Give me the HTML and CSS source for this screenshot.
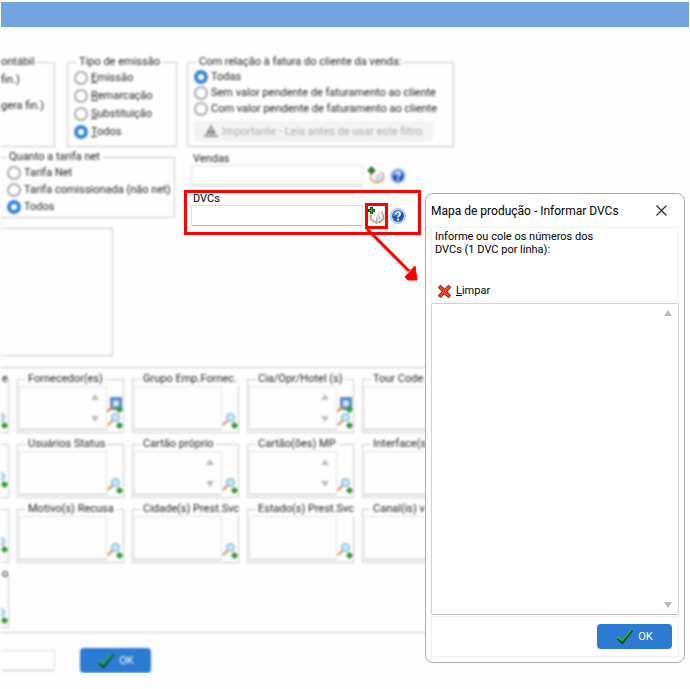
FILE: index.html
```html
<!DOCTYPE html>
<html lang="pt-BR">
<head>
  <meta charset="UTF-8">
  <meta name="viewport" content="width=device-width, initial-scale=1.0">
  <title>Mapa de produção</title>
  <link rel="stylesheet" href="styles.css">
</head>
<body>

  <!-- shared icons -->
  <svg class="sprite" aria-hidden="true">
    <symbol id="icon-search" viewBox="0 0 16 16">
      <path d="M1.500 11.500 6 7" stroke="#e0965a" stroke-width="2.400" stroke-linecap="round"/>
      <circle cx="8.500" cy="4.500" r="3.900" fill="#c4e8fb" stroke="#8cb4dc" stroke-width="1.400"/>
      <path d="M12.500 9.500v6M9.500 12.500h6" stroke="#2f9a2c" stroke-width="3"/>
    </symbol>
    <symbol id="icon-search-all" viewBox="0 0 16 16">
      <path d="M3 0h12v13H3z" fill="#5d8fd3"/>
      <path d="M5 2h8v9H5z" fill="#a9c8ee" stroke="#3b6cb4"/>
      <path d="M1 14 5.500 9.500" stroke="#e0863c" stroke-width="2.400" stroke-linecap="round"/>
      <circle cx="9" cy="6.500" r="3.200" fill="#d4f1fd" stroke="#78a8dc"/>
      <path d="M12.500 9.500v6M9.500 12.500h6" stroke="#2f9a2c" stroke-width="3"/>
    </symbol>
    <symbol id="icon-book" viewBox="0 0 17 18">
      <path d="M2.500 8 3 12.500 8.500 16.200 11 14.800 12.500 15 16 11 14 5" fill="#fff3e4" stroke="#ee8236" stroke-width="1.300"/>
      <path d="M3.200 7 6 7.500 9 10.500 8.500 14.800 4 11.800z" fill="#fff" stroke="#b9d3ea" stroke-width=".6"/>
      <path d="M9 10.500 10 6.500 13.500 4.500 15 10 11.500 13.500 8.500 14.800z" fill="#e3f2fd" stroke="#9cc3e6" stroke-width=".6"/>
      <path d="M9 10.500 8.600 14.800M11 8.500 11.500 12" stroke="#6fb0e0" stroke-width=".9"/>
      <path d="M3.500 0v7M0 3.500h7" stroke="#0b4a0b" stroke-width="3"/>
      <path d="M3.500 1v5M1 3.500h5" stroke="#38b32e" stroke-width="1.200"/>
    </symbol>
    <symbol id="icon-help" viewBox="0 0 16 16">
      <circle cx="8" cy="8" r="7.400" fill="#e6eefb" stroke="#8fb0e4"/>
      <circle cx="8" cy="8" r="6" fill="#1f53bd"/>
      <path d="M2.500 8a5.500 5.500 0 0 1 9-4Q8 8 2.500 8z" fill="#5c8ae0"/>
      <path d="M5.800 6.300C5.800 3.300 10.400 3.500 10.200 6.200 10 7.500 8 7.600 8 9.300" fill="none" stroke="#fff" stroke-width="1.700"/>
      <path d="M7 10.500h2v2H7z" fill="#fff"/>
    </symbol>
    <symbol id="icon-check" viewBox="0 0 17 16">
      <path d="M1 10 3 8.500 6 11.500 14.500 1.500 16.500 2 6.500 15z" fill="#0a3c20" stroke="#0a2c3c" stroke-width=".8"/>
      <path d="M1 9.200 3 7.800 6 10.800 14.300 1 16 1.500 6.300 13z" fill="#12a51a"/>
      <path d="M1.500 9 3 8 6 11.300 14.500 1.300" fill="none" stroke="#3fd33c" stroke-width=".8"/>
    </symbol>
  </svg>

  <div class="titlebar"></div>

  <main class="window">
    <div class="filters blurred">
      <fieldset class="group cut contabil">
        <legend>ontábil</legend>
        <p>fin.)</p>
        <p>gera fin.)</p>
      </fieldset>

      <fieldset class="group emissao">
        <legend>Tipo de emissão</legend>
        <label><input type="radio" name="emissao"><span><u>E</u>missão</span></label>
        <label><input type="radio" name="emissao"><span><u>R</u>emarcação</span></label>
        <label><input type="radio" name="emissao"><span><u>S</u>ubstituição</span></label>
        <label><input type="radio" name="emissao" checked><span><u>T</u>odos</span></label>
      </fieldset>

      <fieldset class="group fatura">
        <legend>Com relação à fatura do cliente da venda:</legend>
        <label><input type="radio" name="fatura" checked><span>Todas</span></label>
        <label><input type="radio" name="fatura"><span>Sem valor pendente de faturamento ao cliente</span></label>
        <label><input type="radio" name="fatura"><span>Com valor pendente de faturamento ao cliente</span></label>
        <button type="button" class="notice" disabled>
          <svg width="14" height="13" viewBox="0 0 14 13"><path d="M7 0 12 9H2z" fill="#777"/><path d="M0 10h14v2H0z" fill="#999"/><path d="M7 3v3M7 7v1" stroke="#fff" stroke-width="1.500"/></svg>
          Importante - Leia antes de usar este filtro
        </button>
      </fieldset>
    </div>

    <div class="middle">
      <div class="middle-left blurred">
        <fieldset class="group cut tarifa">
          <legend>Quanto a tarifa net</legend>
          <label><input type="radio" name="tarifa"><span>Tarifa Net</span></label>
          <label><input type="radio" name="tarifa"><span>Tarifa comissionada (não net)</span></label>
          <label><input type="radio" name="tarifa" checked><span>Todos</span></label>
        </fieldset>
        <div class="empty-box"></div>
      </div>

      <div class="middle-right">
        <div class="lookup blurred">
          <label for="vendas">Vendas</label>
          <div class="lookup-row">
            <input type="text" id="vendas">
            <button type="button" class="book" aria-label="Informar vendas"><svg><use href="#icon-book"/></svg></button>
            <button type="button" class="help" aria-label="Ajuda"><svg><use href="#icon-help"/></svg></button>
          </div>
        </div>

        <div class="lookup marked">
          <label for="dvcs">DVCs</label>
          <div class="lookup-row">
            <input type="text" id="dvcs">
            <button type="button" class="book" aria-label="Informar DVCs"><svg><use href="#icon-book"/></svg></button>
            <button type="button" class="help" aria-label="Ajuda"><svg><use href="#icon-help"/></svg></button>
          </div>
          <svg class="arrow" viewBox="0 0 54 56"><path d="M2 2 44 44" stroke="#f00" stroke-width="3"/><path d="M40 50 50 39 52 53 43 53z" fill="#f00" stroke="#f00"/></svg>
        </div>
      </div>
    </div>

    <div class="panel blurred">
      <fieldset class="list cut"><legend>e</legend><div class="tools"><svg><use href="#icon-search"/></svg></div></fieldset>
      <fieldset class="list">
        <legend>Fornecedor(es)</legend>
        <div class="box scroll"></div>
        <div class="tools"><svg><use href="#icon-search-all"/></svg><svg><use href="#icon-search"/></svg></div>
      </fieldset>
      <fieldset class="list">
        <legend>Grupo Emp.Fornec.</legend>
        <div class="box"></div>
        <div class="tools"><svg><use href="#icon-search"/></svg></div>
      </fieldset>
      <fieldset class="list">
        <legend>Cia/Opr/Hotel (s)</legend>
        <div class="box scroll"></div>
        <div class="tools"><svg><use href="#icon-search-all"/></svg><svg><use href="#icon-search"/></svg></div>
      </fieldset>
      <fieldset class="list"><legend>Tour Code</legend><div class="box"></div></fieldset>

      <fieldset class="list cut"><div class="tools"><svg><use href="#icon-search"/></svg></div></fieldset>
      <fieldset class="list">
        <legend>Usuários Status</legend>
        <div class="box"></div>
        <div class="tools"><svg><use href="#icon-search"/></svg></div>
      </fieldset>
      <fieldset class="list">
        <legend>Cartão próprio</legend>
        <div class="box scroll"></div>
        <div class="tools"><svg><use href="#icon-search"/></svg></div>
      </fieldset>
      <fieldset class="list">
        <legend>Cartão(ões) MP</legend>
        <div class="box scroll"></div>
        <div class="tools"><svg><use href="#icon-search"/></svg></div>
      </fieldset>
      <fieldset class="list"><legend>Interface(s)</legend><div class="box"></div></fieldset>

      <fieldset class="list cut"><div class="tools"><svg><use href="#icon-search"/></svg></div></fieldset>
      <fieldset class="list">
        <legend>Motivo(s) Recusa</legend>
        <div class="box"></div>
        <div class="tools"><svg><use href="#icon-search"/></svg></div>
      </fieldset>
      <fieldset class="list">
        <legend>Cidade(s) Prest.Svc</legend>
        <div class="box"></div>
        <div class="tools"><svg><use href="#icon-search"/></svg></div>
      </fieldset>
      <fieldset class="list">
        <legend>Estado(s) Prest.Svc</legend>
        <div class="box"></div>
        <div class="tools"><svg><use href="#icon-search"/></svg></div>
      </fieldset>
      <fieldset class="list"><legend>Canal(is) v</legend><div class="box"></div></fieldset>

      <fieldset class="list cut"><legend>o</legend><div class="tools"><svg><use href="#icon-search"/></svg></div></fieldset>
    </div>

    <div class="actions blurred">
      <input type="text" aria-label="Modelo">
      <button type="button" class="ok"><svg><use href="#icon-check"/></svg>OK</button>
    </div>
  </main>

  <section class="dialog" role="dialog" aria-labelledby="dialog-title">
    <header>
      <h1 id="dialog-title">Mapa de produção - Informar DVCs</h1>
      <button type="button" class="close" aria-label="Fechar"><svg viewBox="0 0 11 11"><path d="M.5.5l10 10M10.500.500l-10 10" stroke="#222" stroke-width="1.100"/></svg></button>
    </header>
    <div class="dialog-top">
      <label for="numeros">Informe ou cole os números dos<br>DVCs (1 DVC por linha):</label>
      <button type="button" class="clear">
        <svg viewBox="0 0 13 13"><path d="M2.500 2.500l8 8M10.500 2.500l-8 8" stroke="#9c1c0c" stroke-width="4" stroke-linecap="square"/><path d="M2.500 2.500l8 8M10.500 2.500l-8 8" stroke="#f4452c" stroke-width="2.300" stroke-linecap="square"/></svg>
        <span><u>L</u>impar</span>
      </button>
    </div>
    <div class="numbers scroll">
      <textarea id="numeros"></textarea>
    </div>
    <footer>
      <button type="button" class="ok"><svg><use href="#icon-check"/></svg>OK</button>
    </footer>
  </section>

</body>
</html>
```

FILE: styles.css
```css
* {
  margin: 0;
  padding: 0;
  box-sizing: border-box;
}

body {
  font-family: Tahoma, Roboto, "Liberation Sans", sans-serif;
  font-size: 11px;
  line-height: 14px;
  background-color: #fefefe;
  color: #000;
  position: relative;
  overflow: hidden;
}

button,
input,
textarea {
  font: inherit;
  color: inherit;
}

button {
  background: none;
  border: none;
}

svg {
  display: block;
  flex: none;
}

.sprite {
  position: absolute;
  width: 0;
  height: 0;
}

.blurred {
  color: #222;
  filter: blur(1px);
}

.titlebar {
  height: 25px;
  margin: 2px 1px 0;
  background-color: #72a5e0;
}

.window {
  padding: 28px 0 0 1px;
}

/* filter groups */
.filters {
  display: flex;
  gap: 12px;
}

.group,
.list {
  border: 1px solid #ccc;
  min-width: 0;
}

legend {
  margin-left: 7px;
  padding: 0 2px;
  white-space: nowrap;
}

.cut {
  border-left: none;
}

.group {
  padding: 0 6px;
}

.group label {
  display: flex;
  align-items: center;
  gap: 3px;
  height: 17px;
  white-space: nowrap;
}

.group input {
  flex: none;
  appearance: none;
  width: 14px;
  height: 14px;
  border: 2px solid #aaa;
  border-radius: 50%;
  background-color: #fff;
}

.group input:checked {
  border: 4px solid #3684dc;
}

.contabil {
  width: 54px;
  padding: 4px 0;
}

.contabil legend {
  margin: 0;
  padding: 0;
}

.contabil p {
  margin-bottom: 12px;
  white-space: nowrap;
}

.emissao {
  width: 110px;
}

.emissao label {
  height: 18px;
}

.fatura {
  width: 267px;
  height: 92px;
  margin-left: -2px;
}

.fatura legend,
.emissao legend {
  margin-left: 3px;
}

.fatura label {
  height: 16px;
}

.notice {
  display: flex;
  align-items: center;
  gap: 4px;
  height: 21px;
  margin-top: 4px;
  padding: 0 10px;
  background-color: #f3f3f3;
  border-radius: 3px;
  color: #aaa;
  white-space: nowrap;
}

.middle {
  display: flex;
  align-items: flex-start;
  gap: 9px;
  margin-top: 3px;
}

.middle-left {
  width: 174px;
}

.tarifa {
  height: 68px;
}

.tarifa legend {
  margin-left: 0;
}

.empty-box {
  width: 112px;
  height: 128px;
  margin-top: 10px;
  border: 1px solid #ccc;
  border-left: none;
}

/* Vendas / DVCs */
.lookup {
  width: 237px;
  padding: 3px 7px 4px;
}

.lookup label {
  display: block;
  padding-left: 2px;
  line-height: 12px;
}

.lookup-row {
  display: flex;
  align-items: center;
  gap: 2px;
}

.lookup input,
.actions input {
  width: 172px;
  height: 21px;
  border: 1px solid #ddd;
  border-bottom-color: #bbb;
  border-radius: 2px;
  background-color: #fff;
}

.book {
  height: 26px;
  margin: -3px 0;
  border: 3px solid transparent;
}

.book svg {
  width: 17px;
  height: 18px;
}

.help svg {
  width: 16px;
  height: 16px;
}

.marked {
  position: relative;
  padding: 0 4px 6px;
  border: 3px solid #f00;
}

.marked .book {
  border-color: #f00;
}

.arrow {
  position: absolute;
  left: 178px;
  top: 34px;
  width: 54px;
  height: 56px;
}

/* lists */
.panel {
  display: grid;
  grid-template-columns: 8px repeat(4, 107px);
  grid-auto-rows: 61px;
  gap: 4px 8px;
  margin-top: 11px;
  margin-right: 16px;
  padding: 4px 0;
  border-top: 1px solid #ccc;
  border-bottom: 1px solid #ccc;
}

.list {
  display: flex;
  justify-content: space-between;
  padding: 0 0 1px 1px;
}

.list.cut {
  justify-content: flex-end;
  overflow: hidden;
}

.list.cut legend {
  margin: 0;
  padding: 0;
}

.list.cut:not(:has(legend)) {
  margin-top: 7px;
}

.box {
  width: 88px;
  height: 44px;
  border: 1px solid #e4e4e4;
  border-bottom-color: #bbb;
}

.tools {
  display: flex;
  flex-direction: column;
  justify-content: flex-end;
  height: 43px;
}

.tools svg {
  width: 16px;
  height: 16px;
}

.scroll {
  position: relative;
}

.scroll::before,
.scroll::after {
  content: "";
  position: absolute;
  right: 7px;
  border: 4px solid transparent;
}

.scroll::before {
  top: 7px;
  border-top: none;
  border-bottom: 6px solid #bbb;
}

.scroll::after {
  bottom: 7px;
  border-bottom: none;
  border-top: 6px solid #bbb;
}

.actions {
  display: flex;
  align-items: center;
  gap: 25px;
  margin-top: 15px;
}

.actions input {
  width: 54px;
  border-left: none;
}

.ok {
  display: flex;
  align-items: center;
  justify-content: center;
  gap: 5px;
  width: 75px;
  height: 25px;
  background-color: #2b7bd3;
  border-radius: 4px;
  color: #fff;
}

.ok svg {
  width: 17px;
  height: 16px;
}

.actions .ok {
  width: 71px;
}

/* dialog */
.dialog {
  position: absolute;
  left: 425px;
  top: 193px;
  width: 260px;
  padding: 0 5px 5px;
  background-color: #fff;
  border: 1px solid #aaa;
  border-radius: 8px;
}

.dialog header {
  display: flex;
  align-items: center;
  justify-content: space-between;
  height: 33px;
}

.dialog h1 {
  font-size: 12px;
  font-weight: normal;
  white-space: nowrap;
}

.close {
  padding: 0 12px;
}

.close svg {
  width: 11px;
  height: 11px;
}

.dialog-top {
  height: 75px;
  padding: 2px 3px;
  border: 1px solid #f0f0f0;
}

.dialog-top label {
  display: block;
  line-height: 13px;
}

.clear {
  display: flex;
  align-items: center;
  gap: 5px;
  margin-top: 28px;
  padding-left: 3px;
}

.clear svg {
  width: 13px;
  height: 13px;
}

.numbers {
  margin: 1px 0;
}

.numbers textarea {
  display: block;
  width: 100%;
  height: 312px;
  border: 1px solid #d0d0d0;
  border-bottom-color: #bbb;
  border-radius: 2px;
  resize: none;
}

.dialog footer {
  display: flex;
  justify-content: flex-end;
  padding: 7px 6px;
  border: 1px solid #f0f0f0;
}
```
